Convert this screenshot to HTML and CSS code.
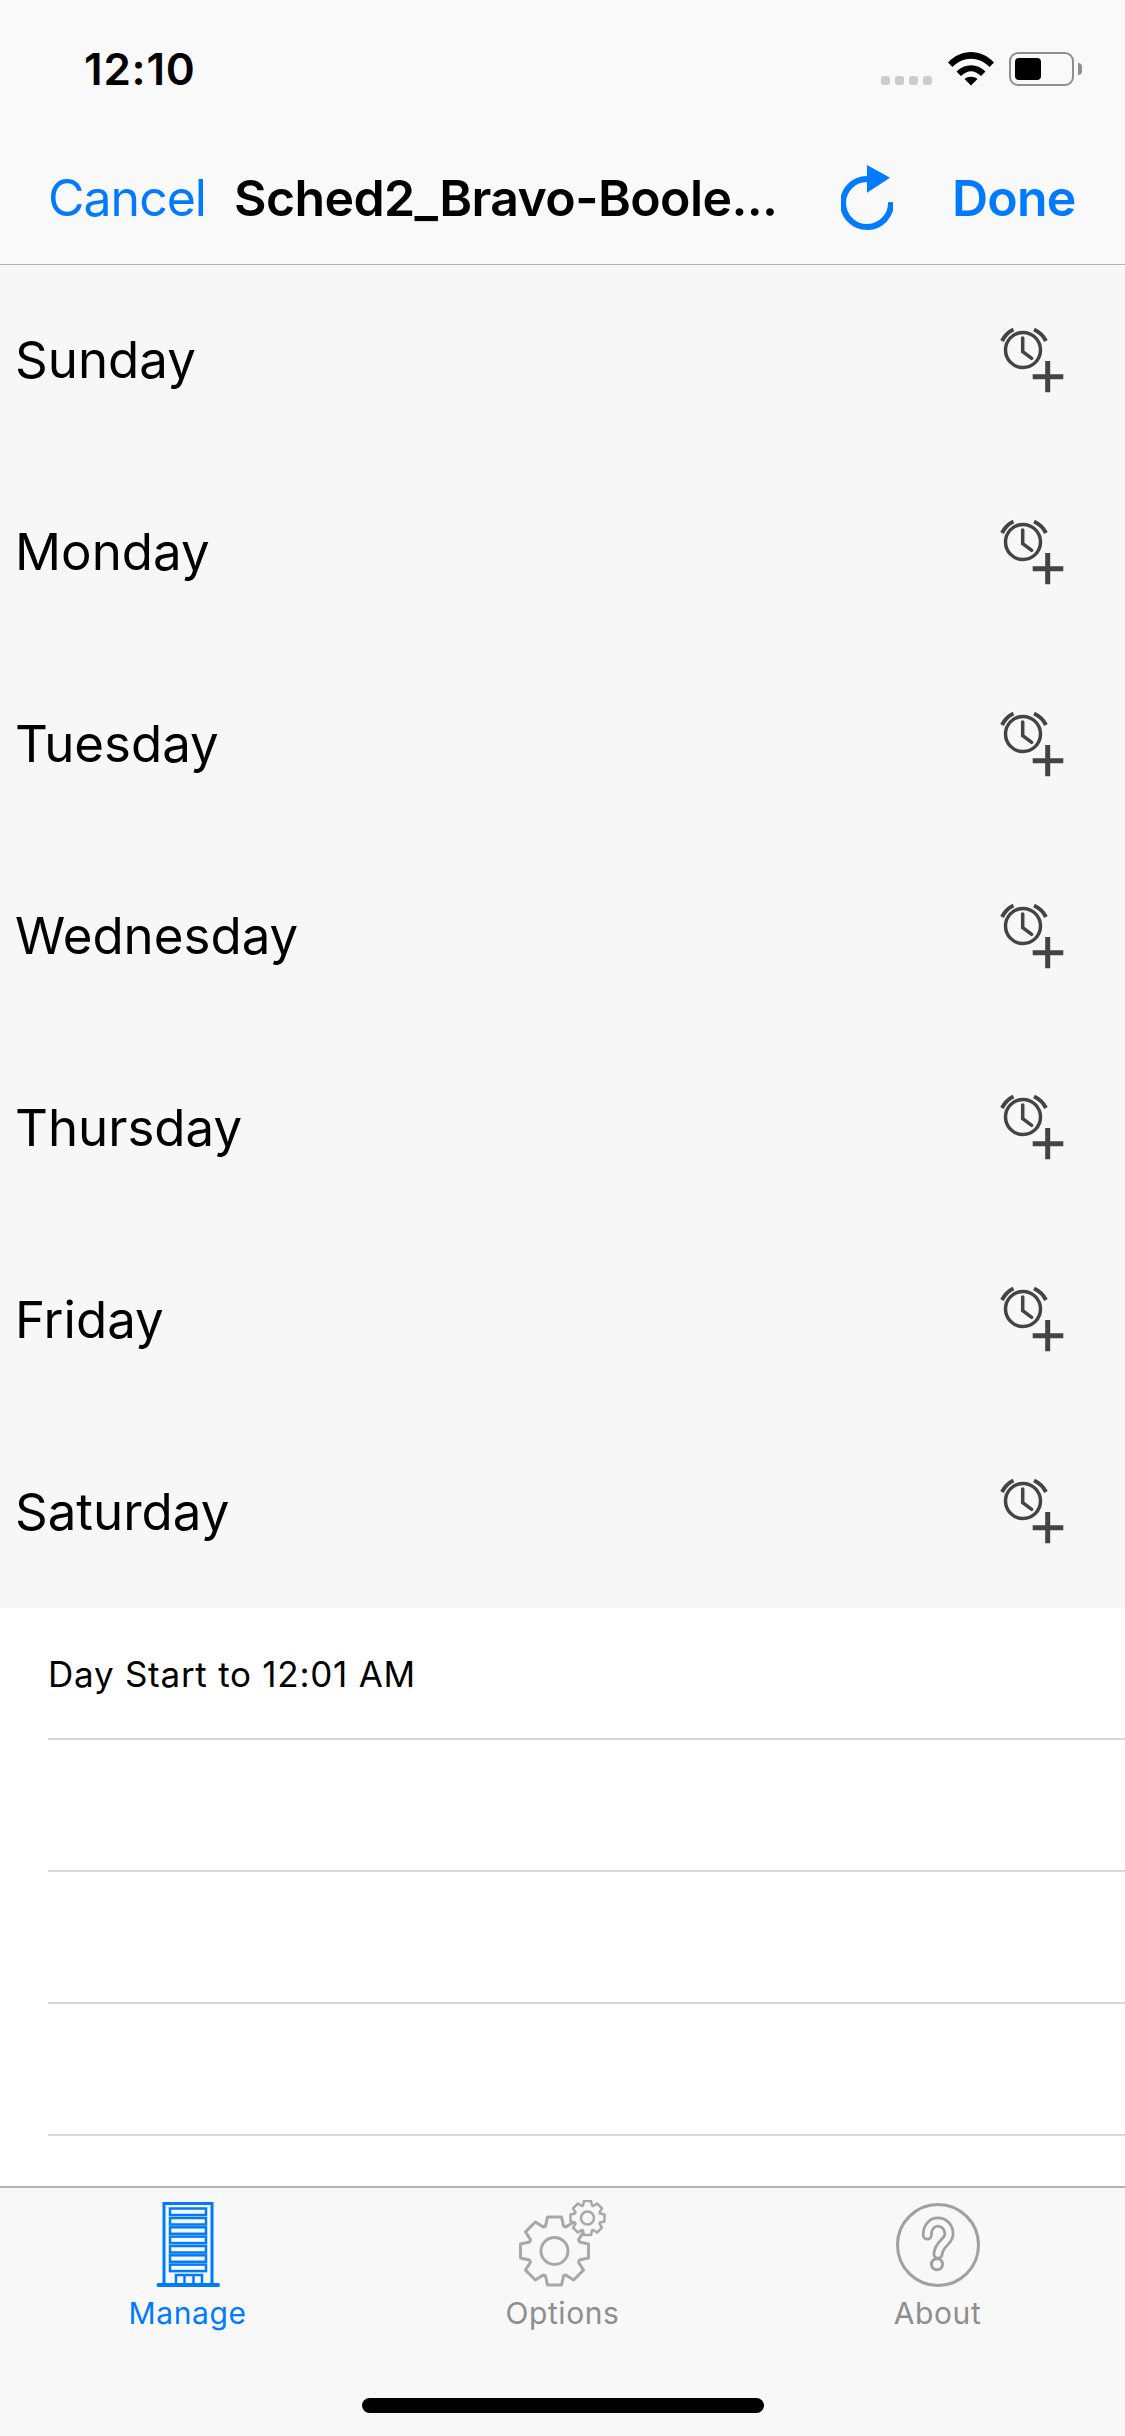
FILE: index.html
```html
<!DOCTYPE html>
<html lang="en">
<head>
    <meta charset="UTF-8">
    <title>Schedule</title>
    <link rel="stylesheet" href="styles.css">
</head>
<body>
    <div class="screen">
        <div class="status-bar">
            <span class="time">12:10</span>
            <div class="status-icons">
                <div class="signal"><i></i><i></i><i></i><i></i></div>
                <svg class="wifi" width="46" height="34" viewBox="0 0 46 34">
                    <path d="M0 10.5 C13 -3.5 33 -3.5 46 10.5 L41.5 15 C31 4 15 4 4.500 15Z"/>
                    <path d="M8.500 19.500 C17 11 29 11 37.500 19.500 L33 24 C26 17.500 20 17.500 13 24Z"/>
                    <path d="M16.500 27 C20 24 26 24 29.500 27 L23 33.500Z"/>
                </svg>
                <div class="battery"><div class="battery-fill"></div></div>
                <div class="battery-nub"></div>
            </div>
        </div>

        <nav class="nav-bar">
            <span class="nav-cancel">Cancel</span>
            <span class="nav-title">Sched2_Bravo-Boole...</span>
            <svg class="nav-refresh" width="52" height="68" viewBox="0 0 52 68">
                <path class="refresh-arc" d="M50 38 A24 24 0 1 1 26 15"/>
                <path class="refresh-head" d="M26 1 L49 13.700 L26 28.700Z"/>
            </svg>
            <span class="nav-done">Done</span>
        </nav>

        <ul class="days">
            <li class="day"><span>Sunday</span><svg class="add-alarm" viewBox="0 0 80 80"><use href="#alarm-plus"/></svg></li>
            <li class="day"><span>Monday</span><svg class="add-alarm" viewBox="0 0 80 80"><use href="#alarm-plus"/></svg></li>
            <li class="day"><span>Tuesday</span><svg class="add-alarm" viewBox="0 0 80 80"><use href="#alarm-plus"/></svg></li>
            <li class="day"><span>Wednesday</span><svg class="add-alarm" viewBox="0 0 80 80"><use href="#alarm-plus"/></svg></li>
            <li class="day"><span>Thursday</span><svg class="add-alarm" viewBox="0 0 80 80"><use href="#alarm-plus"/></svg></li>
            <li class="day"><span>Friday</span><svg class="add-alarm" viewBox="0 0 80 80"><use href="#alarm-plus"/></svg></li>
            <li class="day"><span>Saturday</span><svg class="add-alarm" viewBox="0 0 80 80"><use href="#alarm-plus"/></svg></li>
        </ul>

        <ul class="periods">
            <li class="period">Day Start to 12:01 AM</li>
            <li class="period"></li>
            <li class="period"></li>
            <li class="period"></li>
        </ul>

        <div class="tab-bar">
            <div class="tab tab-active">
                <svg class="tab-icon" viewBox="0 0 90 90">
                    <path class="line" d="M21 85 V3.500 H69 V85"/>
                    <path class="base" d="M15.500 85 H75"/>
                    <rect class="line-thin" x="27" y="8.500" width="36" height="6.500"/>
                    <rect class="line-thin" x="27" y="18" width="36" height="6.500"/>
                    <rect class="line-thin" x="27" y="27.300" width="36" height="6.500"/>
                    <rect class="line-thin" x="27" y="36.600" width="36" height="6.500"/>
                    <rect class="line-thin" x="27" y="46" width="36" height="6.500"/>
                    <rect class="line-thin" x="27" y="55.300" width="36" height="6.500"/>
                    <rect class="line-thin" x="27" y="64.600" width="36" height="6.500"/>
                    <path class="line-thin" d="M33 85 V75 H59 V85 M41.500 75 V85 M50.500 75 V85"/>
                </svg>
                <span>Manage</span>
            </div>
            <div class="tab">
                <svg class="tab-icon" viewBox="0 0 90 90">
                    <defs>
                        <path id="gear" d="M-9-25 L-7-34 L7-34 L9-25 L11.300-24 L19.100-29 L29-19.100 L24-11.300 L25-9 L34-7 L34 7 L25 9 L24 11.300 L29 19.100 L19.100 29 L11.300 24 L9 25 L7 34 L-7 34 L-9 25 L-11.300 24 L-19.100 29 L-29 19.100 L-24 11.300 L-25 9 L-34 7 L-34-7 L-25-9 L-24-11.300 L-29-19.100 L-19.100-29 L-11.300-24Z"/>
                    </defs>
                    <g class="gear-big" transform="translate(36.500 51)">
                        <use href="#gear"/>
                        <circle r="13.500"/>
                    </g>
                    <g class="gear-small" transform="translate(69.500 18) scale(.5)">
                        <use href="#gear"/>
                        <circle r="13"/>
                    </g>
                </svg>
                <span>Options</span>
            </div>
            <div class="tab">
                <svg class="tab-icon" viewBox="0 0 90 90">
                    <circle class="about-ring" cx="45" cy="45" r="40.500"/>
                    <g transform="translate(45 45)">
                        <path class="q-outer" d="M-10.700-10 C-10.700-18 -6-23 0-23 C6-23 11-18 11-11 C11-3 1-2 0 9"/>
                        <circle class="q-dot" cx="-1" cy="19.300" r="5.500"/>
                        <path class="q-inner" d="M-10.700-10 C-10.700-18 -6-23 0-23 C6-23 11-18 11-11 C11-3 1-2 0 9"/>
                    </g>
                </svg>
                <span>About</span>
            </div>
        </div>
        <div class="home-indicator"></div>
    </div>

    <svg class="sprites" width="0" height="0">
        <defs>
            <g id="alarm-plus">
                <circle class="alarm-line" cx="33" cy="29" r="17.500"/>
                <path class="alarm-line" d="M32.700 17 V30.700 L41.700 37.300"/>
                <path class="alarm-bell" d="M12 20 C15 14 18 11 23.500 8.500 M44 8.500 C49.500 11 53 14 56 20"/>
                <path class="alarm-plus" d="M42.700 55.700 H73.300 M57.700 40 V71.300"/>
            </g>
        </defs>
    </svg>
</body>
</html>
```

FILE: styles.css
```css
* {
    box-sizing: border-box;
}

body {
    margin: 0;
    background: #fff;
    font-family: 'Inter', sans-serif;
    color: #000;
}

ul {
    list-style: none;
    margin: 0;
    padding: 0;
}

.screen {
    position: relative;
    width: 1125px;
    height: 2436px;
    display: flex;
    flex-direction: column;
    overflow: hidden;
}

.sprites {
    position: absolute;
}

/* Status bar */
.status-bar {
    height: 132px;
    background: #f9f9f9;
    display: flex;
    align-items: flex-start;
    justify-content: space-between;
    padding: 42px 43px 0 84px;
}

.time {
    font-size: 44px;
    font-weight: 600;
    line-height: 54px;
    letter-spacing: 0.8px;
}

.status-icons {
    display: flex;
    align-items: flex-start;
    padding-top: 10px;
}

.signal {
    display: flex;
    gap: 5px;
    margin: 24px 16px 0 0;
}

.signal i {
    width: 9px;
    height: 9px;
    border-radius: 3px;
    background: #ccc;
}

.battery {
    width: 65px;
    height: 34px;
    margin-left: 15px;
    padding: 4px;
    border: 2px solid #8e8e8e;
    border-radius: 9px;
}

.battery-fill {
    width: 26px;
    height: 22px;
    border-radius: 4px;
    background: #000;
}

.battery-nub {
    width: 4px;
    height: 12px;
    margin: 11px 0 0 4px;
    border-radius: 0 4px 4px 0;
    background: #8e8e8e;
}

/* Nav bar */
.nav-bar {
    height: 133px;
    background: #f9f9f9;
    border-bottom: 1px solid #b2b2b2;
    display: flex;
    align-items: center;
    padding: 0 48px;
    font-size: 50px;
}

.nav-cancel {
    width: 186px;
    flex: none;
    color: #007aff;
    letter-spacing: -1px;
}

.nav-title {
    width: 607px;
    flex: none;
    font-weight: 600;
    letter-spacing: -0.6px;
    white-space: nowrap;
}

.nav-refresh {
    flex: none;
    margin-right: 59px;
}

.refresh-arc {
    fill: none;
    stroke: #007aff;
    stroke-width: 6;
}

.refresh-head {
    fill: #007aff;
}

.nav-done {
    flex: none;
    color: #007aff;
    font-weight: 600;
    letter-spacing: -0.8px;
}

/* Days */
.days {
    height: 1343px;
    background: #f7f7f7;
    display: flex;
    flex-direction: column;
}

.day {
    flex: 1;
    display: flex;
    align-items: center;
    justify-content: space-between;
    padding: 0 55px 0 15px;
    font-size: 51px;
    letter-spacing: 0;
}

.day span {
    margin-bottom: 2px;
}

.add-alarm {
    width: 80px;
    height: 80px;
}

.alarm-line {
    fill: none;
    stroke: #444;
    stroke-width: 3.500;
    stroke-linecap: round;
}

.alarm-bell {
    fill: none;
    stroke: #444;
    stroke-width: 4;
}

.alarm-plus {
    fill: none;
    stroke: #444;
    stroke-width: 5;
}

/* Periods */
.periods {
    flex: 1;
    background: #fff;
    padding-left: 48px;
}

.period {
    height: 132px;
    border-bottom: 2px solid #d8d8d8;
    padding-top: 45px;
    font-size: 35px;
    line-height: 42px;
    letter-spacing: 0.75px;
}

/* Tab bar */
.tab-bar {
    height: 250px;
    background: #f8f8f8;
    border-top: 2px solid #b2b2b2;
    display: flex;
}

.tab {
    flex: 1;
    display: flex;
    flex-direction: column;
    align-items: center;
    padding-top: 12px;
    color: #8e8e8e;
    font-size: 30px;
    line-height: 38px;
    letter-spacing: 0.6px;
}

.tab-active {
    color: #007aff;
}

.tab-icon {
    width: 90px;
    height: 90px;
    margin-bottom: 4px;
}

.line {
    fill: none;
    stroke: #007aff;
    stroke-width: 3;
}

.line-thin {
    fill: none;
    stroke: #007aff;
    stroke-width: 2.500;
}

.base {
    fill: none;
    stroke: #007aff;
    stroke-width: 4;
    stroke-linecap: round;
}

.gear-big use,
.gear-big circle {
    fill: #f8f8f8;
    stroke: #a8a8a8;
    stroke-width: 3;
    stroke-linejoin: round;
}

.gear-small use,
.gear-small circle {
    fill: #f8f8f8;
    stroke: #a8a8a8;
    stroke-width: 5;
    stroke-linejoin: round;
}

.about-ring {
    fill: none;
    stroke: #a0a0a0;
    stroke-width: 3;
}

.q-outer {
    fill: none;
    stroke: #a0a0a0;
    stroke-width: 11;
    stroke-linecap: round;
}

.q-inner {
    fill: none;
    stroke: #f8f8f8;
    stroke-width: 5.500;
    stroke-linecap: round;
}

.q-dot {
    fill: #f8f8f8;
    stroke: #a0a0a0;
    stroke-width: 3;
}

.home-indicator {
    position: absolute;
    left: 362px;
    bottom: 23px;
    width: 402px;
    height: 15px;
    border-radius: 8px;
    background: #000;
}
```
